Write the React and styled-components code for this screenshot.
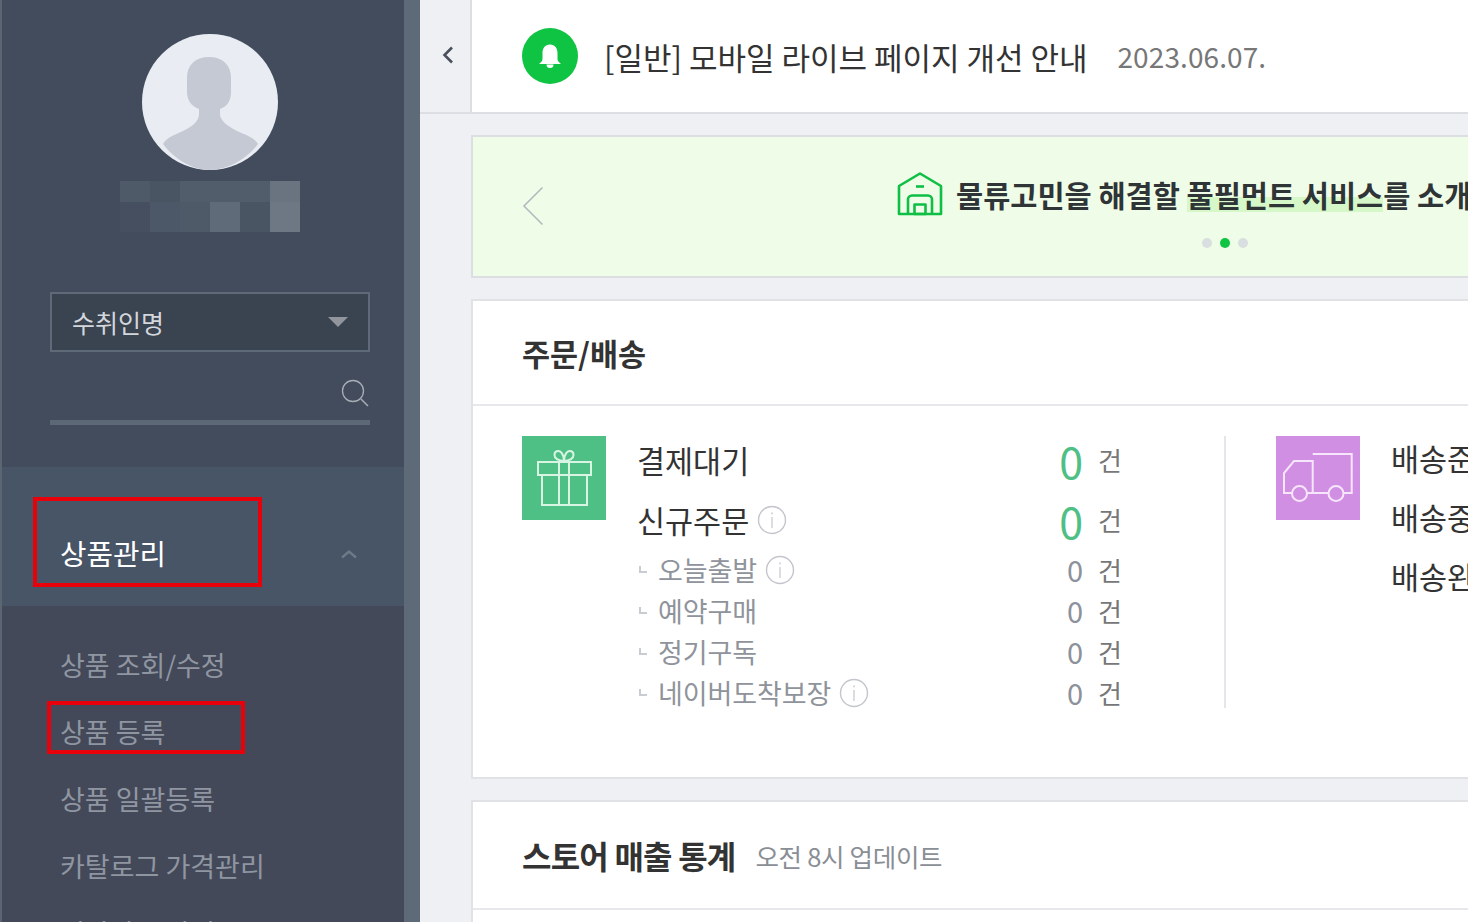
import React from "react";
import styled, { createGlobalStyle } from "styled-components";

const GlobalStyle = createGlobalStyle`
  html, body {
    margin: 0;
    padding: 0;
    height: 100%;
    overflow: hidden;
    background: #eef0f4;
    font-family: "Noto Sans CJK KR", "Noto Sans", sans-serif;
  }
  * { box-sizing: border-box; }
`;

const BLUR_CELLS = [
  "#4f5a69", "#4a5564", "#525d6c", "#525d6c", "#525d6c", "#6a7380",
  "#454f5f", "#4c5767", "#4f5a69", "#606b79", "#4a5564", "#6e7784",
];

const MENU = ["상품 조회/수정", "상품 등록", "상품 일괄등록", "카탈로그 가격관리", "연관상품 관리"];

const SUB_ROWS = [
  { label: "오늘출발", info: true },
  { label: "예약구매" },
  { label: "정기구독" },
  { label: "네이버도착보장", info: true },
];

function InfoIcon() {
  return (
    <InfoSvg viewBox="0 0 30 30">
      <circle cx="15" cy="15" r="13.5" fill="none" stroke="#c3c6cc" strokeWidth="1.4" />
      <path d="M15 12v11" stroke="#c3c6cc" strokeWidth="1.2" />
      <path d="M15 7.5v1.8" stroke="#c3c6cc" strokeWidth="1.4" />
    </InfoSvg>
  );
}

function Count({ big }) {
  return (
    <CountCell>
      <CountNum $big={big}>0</CountNum>
      <CountUnit>건</CountUnit>
    </CountCell>
  );
}

export default function App() {
  return (
    <Page>
      <GlobalStyle />
      <Sidebar>
        <Rail />
        <Profile>
          <Avatar>
            <svg width="136" height="136" viewBox="0 0 136 136">
              <path
                d="M67 23c-14 0-22 8-22 21v14c0 8 4 14 12 17v5c0 6-5 12-16 17-9 4-17 7-20 13 12 16 30 26 47 26s36-10 48-26c-3-6-12-9-21-13-10-5-17-11-17-17v-5c8-3 11-9 11-17V44c0-13-8-21-22-21z"
                fill="#c5c9d3"
              />
            </svg>
          </Avatar>
          <BlurName>
            {BLUR_CELLS.map((c, i) => (
              <BlurCell key={i} $color={c} />
            ))}
          </BlurName>
        </Profile>
        <Filter>
          <Select>
            수취인명
            <Caret />
          </Select>
          <SearchField>
            <svg width="30" height="30" viewBox="0 0 30 30">
              <circle cx="13" cy="13" r="10.5" fill="none" stroke="#a8adb6" strokeWidth="1.3" />
              <path d="M21 21l7 7" stroke="#a8adb6" strokeWidth="1.5" />
            </svg>
          </SearchField>
        </Filter>
        <MenuHead>
          상품관리
          <RedBox $left={33} $top={30} $width={229} $height={90} />
          <svg width="18" height="10" viewBox="0 0 18 10">
            <path d="M2 8.5l7-6 7 6" fill="none" stroke="#6f7a89" strokeWidth="2.4" />
          </svg>
        </MenuHead>
        <SubMenu>
          {MENU.map((m, i) => (
            <SubItem key={m}>
              {m}
              {i === 1 && <RedBox $left={47} $top={2} $width={198} $height={53} />}
            </SubItem>
          ))}
        </SubMenu>
      </Sidebar>

      <Main>
        <TopBar>
          <Collapse>
            <svg width="14" height="20" viewBox="0 0 14 20">
              <path d="M11 2.5L3.5 10l7.5 7.5" fill="none" stroke="#4a505b" strokeWidth="2.6" />
            </svg>
          </Collapse>
          <Notice>
            <BellBadge>
              <svg width="26" height="26" viewBox="0 0 26 26">
                <path
                  d="M13 1.5c-5 0-7.5 3.8-7.5 8.5v6c0 2-1.6 3.4-3.5 5h22c-1.900-1.600-3.500-3-3.500-5v-6c0-4.700-2.500-8.500-7.500-8.500z"
                  fill="#fff"
                />
                <path d="M9.500 21.500a3.500 3.500 0 0 0 7 0z" fill="#fff" />
              </svg>
            </BellBadge>
            <NoticeTitle>[일반] 모바일 라이브 페이지 개선 안내</NoticeTitle>
            <NoticeDate>2023.06.07.</NoticeDate>
          </Notice>
        </TopBar>

        <Content>
          <Banner>
            <svg width="22" height="40" viewBox="0 0 22 40">
              <path d="M20.500 1.500L2 20l18.500 18.500" fill="none" stroke="#b4b9c0" strokeWidth="1.6" />
            </svg>
            <BannerBody>
              <BannerLine>
                <svg width="46" height="44" viewBox="0 0 46 44">
                  <g fill="none" stroke="#0dbf45" strokeWidth="2.6" strokeLinejoin="round">
                    <path d="M2 14L23 1.500 44 14v28H2z" />
                    <path d="M11 42V27.500a4 4 0 0 1 4-4h16a4 4 0 0 1 4 4V42" />
                    <path d="M17.500 32.500h11V42h-11z" />
                    <path d="M19 14.500h8" />
                  </g>
                </svg>
                <BannerText>
                  물류고민을 해결할 <Highlight>풀필먼트 서비스</Highlight>를 소개합니다
                </BannerText>
              </BannerLine>
              <Dots>
                <Dot />
                <Dot $active />
                <Dot />
              </Dots>
            </BannerBody>
          </Banner>

          <Card>
            <CardHead>
              <CardTitle>주문/배송</CardTitle>
            </CardHead>
            <OrderBody>
              <OrderGroup>
                <Tile $color="#4fc085">
                  <svg width="84" height="84" viewBox="0 0 84 84">
                    <g fill="none" stroke="#d8f5e4" strokeWidth="2">
                      <path d="M16 26h53v13H16z" />
                      <path d="M20 39h45v30H20z" />
                      <path d="M37 26v43M47 26v43" />
                      <path d="M42 25c-6 0-9.500-3-9.500-6s2-4 4-4 5.500 3 5.500 10c0-7 3.500-10 5.500-10s4 1 4 4-3.500 6-9.500 6z" />
                    </g>
                  </svg>
                </Tile>
                <RowList>
                  <MainRow>
                    <MainLabel>결제대기</MainLabel>
                    <Count big />
                  </MainRow>
                  <MainRow>
                    <MainLabel>
                      신규주문 <InfoIcon />
                    </MainLabel>
                    <Count big />
                  </MainRow>
                  {SUB_ROWS.map((row) => (
                    <SubRow key={row.label}>
                      <SubLabel>
                        <Branch />
                        {row.label}
                        {row.info && <InfoIcon />}
                      </SubLabel>
                      <Count />
                    </SubRow>
                  ))}
                </RowList>
              </OrderGroup>
              <Divider />
              <OrderGroup>
                <Tile $color="#d08fe3">
                  <svg width="84" height="84" viewBox="0 0 84 84">
                    <g fill="none" stroke="#f7e6fb" strokeWidth="2">
                      <path d="M36.700 18h39v39H67.500M52.500 57H30.500M16 57H8V37l10-12h18.700v32" />
                      <circle cx="23.500" cy="57.500" r="7.500" />
                      <circle cx="60" cy="57.500" r="7.500" />
                    </g>
                  </svg>
                </Tile>
                <ShipList>
                  <MainLabel>배송준비</MainLabel>
                  <MainLabel>배송중</MainLabel>
                  <MainLabel>배송완료</MainLabel>
                </ShipList>
              </OrderGroup>
            </OrderBody>
          </Card>

          <Card>
            <StatsHead>
              <StatsTitle>스토어 매출 통계</StatsTitle>
              <StatsNote>오전 8시 업데이트</StatsNote>
            </StatsHead>
            <StatsBody />
          </Card>
        </Content>
      </Main>
    </Page>
  );
}

const Page = styled.div`
  display: flex;
  width: 1468px;
  height: 922px;
  overflow: hidden;
`;

const Sidebar = styled.aside`
  position: relative;
  flex: 0 0 420px;
  height: 922px;
  overflow: hidden;
  background: #424c5d;
  border-left: 2px solid #5c6673;
`;

const Rail = styled.div`
  position: absolute;
  z-index: 2;
  top: 0;
  right: 0;
  bottom: 0;
  width: 16px;
  background: #5f6a78;
`;

const Profile = styled.div`
  display: flex;
  flex-direction: column;
  align-items: center;
  padding-top: 34px;
  margin-left: -2px;
`;

const Avatar = styled.div`
  width: 136px;
  height: 136px;
  border-radius: 50%;
  overflow: hidden;
  background: #e9edf3;
  svg {
    display: block;
  }
`;

const BlurName = styled.div`
  display: grid;
  grid-template-columns: repeat(6, 30px);
  grid-template-rows: 21px 30px;
  margin-top: 11px;
`;

const BlurCell = styled.div`
  background: ${({ $color }) => $color};
`;

const Filter = styled.div`
  display: flex;
  flex-direction: column;
  margin: 60px 50px 0 48px;
  height: 175px;
`;

const Select = styled.div`
  display: flex;
  align-items: center;
  justify-content: space-between;
  height: 60px;
  padding: 0 20px;
  background: #3a4350;
  border: 2px solid #5f6a79;
  color: #d3d6db;
  font-size: 25px;
`;

const Caret = styled.span`
  width: 0;
  height: 0;
  border-left: 10px solid transparent;
  border-right: 10px solid transparent;
  border-top: 10px solid #92959c;
`;

const SearchField = styled.div`
  display: flex;
  justify-content: flex-end;
  align-items: flex-start;
  height: 73px;
  padding-top: 26px;
  border-bottom: 5px solid #5d6876;
  svg {
    display: block;
  }
`;

const MenuHead = styled.div`
  position: relative;
  display: flex;
  align-items: center;
  justify-content: space-between;
  height: 139px;
  padding: 32px 62px 0 58px;
  background: #485566;
  color: #fff;
  font-size: 28.8px;
  svg {
    display: block;
    margin-top: 2px;
  }
`;

const RedBox = styled.div`
  position: absolute;
  left: ${({ $left }) => $left - 2}px;
  top: ${({ $top }) => $top}px;
  width: ${({ $width }) => $width}px;
  height: ${({ $height }) => $height}px;
  border: 4px solid #e8000b;
  z-index: 1;
`;

const SubMenu = styled.div`
  padding-top: 26px;
  background: #434959;
  height: 400px;
`;

const SubItem = styled.div`
  position: relative;
  display: flex;
  align-items: center;
  height: 67px;
  padding: 0 0 3px 58px;
  color: #8f96a1;
  font-size: 27px;
`;

const Main = styled.main`
  flex: 1;
  min-width: 0;
  display: flex;
  flex-direction: column;
  background: #eef0f4;
`;

const TopBar = styled.header`
  flex: 0 0 114px;
  display: flex;
  border-bottom: 2px solid #dcdee3;
`;

const Collapse = styled.div`
  flex: 0 0 50px;
  display: flex;
  align-items: center;
  padding-left: 21px;
  padding-bottom: 3px;
  svg {
    display: block;
  }
`;

const Notice = styled.div`
  flex: 1;
  display: flex;
  align-items: center;
  padding-left: 50px;
  background: #fff;
  border-left: 2px solid #dcdee3;
  white-space: nowrap;
`;

const BellBadge = styled.div`
  display: flex;
  align-items: center;
  justify-content: center;
  width: 56px;
  height: 56px;
  border-radius: 50%;
  background: #0fc443;
`;

const NoticeTitle = styled.span`
  margin-left: 26px;
  color: #333;
  font-size: 31px;
`;

const NoticeDate = styled.span`
  margin-left: 30px;
  color: #777;
  font-size: 28px;
  letter-spacing: 0.1px;
`;

const Content = styled.div`
  flex: 1;
  min-height: 0;
  display: flex;
  flex-direction: column;
  gap: 21px;
  padding: 21px 0 0 51px;
  overflow: hidden;
`;

const Banner = styled.section`
  flex: none;
  display: flex;
  align-items: center;
  height: 143px;
  padding-left: 49px;
  padding-bottom: 2px;
  background: #effde8;
  border: 2px solid #dcdee3;
  border-right: 0;
  white-space: nowrap;
  overflow: hidden;
  svg {
    display: block;
    flex: none;
  }
`;

const BannerBody = styled.div`
  display: flex;
  flex-direction: column;
  margin-left: 353px;
  margin-top: 8px;
`;

const BannerLine = styled.div`
  display: flex;
  align-items: center;
  gap: 13px;
`;

const BannerText = styled.div`
  color: #2f3437;
  font-size: 29.5px;
  font-weight: 700;
`;

const Highlight = styled.span`
  background: linear-gradient(transparent 58%, #d6f8c8 58%, #d6f8c8 92%, transparent 92%);
`;

const Dots = styled.div`
  display: flex;
  gap: 8px;
  margin: 22px 0 0 305px;
`;

const Dot = styled.span`
  width: 10px;
  height: 10px;
  border-radius: 50%;
  background: ${({ $active }) => ($active ? "#0fc443" : "#d9dee0")};
`;

const Card = styled.section`
  flex: none;
  background: #fff;
  border: 2px solid #e0e2e6;
  border-right: 0;
`;

const CardHead = styled.div`
  display: flex;
  align-items: center;
  height: 105px;
  padding-left: 49px;
  border-bottom: 2px solid #e6e8eb;
`;

const CardTitle = styled.h2`
  margin: 0;
  color: #333;
  font-size: 30.5px;
  font-weight: 700;
`;

const OrderBody = styled.div`
  display: flex;
  align-items: flex-start;
  height: 371px;
  padding: 30px 0 0 49px;
  white-space: nowrap;
`;

const OrderGroup = styled.div`
  display: flex;
  gap: 31px;
`;

const Tile = styled.div`
  flex: 0 0 84px;
  width: 84px;
  height: 84px;
  background: ${({ $color }) => $color};
  svg {
    display: block;
  }
`;

const RowList = styled.div`
  display: flex;
  flex-direction: column;
  width: 485px;
`;

const MainRow = styled.div`
  display: flex;
  align-items: center;
  justify-content: space-between;
  height: 60px;
  margin-top: -6px;
  margin-bottom: 6px;
`;

const MainLabel = styled.div`
  display: flex;
  align-items: center;
  gap: 8px;
  color: #333;
  font-size: 30.5px;
`;

const SubRow = styled.div`
  display: flex;
  align-items: center;
  justify-content: space-between;
  height: 41px;
  &:nth-child(3) {
    margin-top: -7px;
  }
`;

const SubLabel = styled.div`
  display: flex;
  align-items: center;
  color: #8f939b;
  font-size: 27px;
  letter-spacing: -0.1px;
  svg {
    margin-left: 8px;
  }
`;

const Branch = styled.span`
  width: 8px;
  height: 7px;
  margin: 0 11px 0 2px;
  border-left: 2px solid #c9ccd1;
  border-bottom: 2px solid #c9ccd1;
`;

const InfoSvg = styled.svg`
  display: block;
  width: 30px;
  height: 30px;
`;

const CountCell = styled.div`
  display: flex;
  align-items: center;
  justify-content: flex-end;
  gap: 15px;
`;

const CountNum = styled.span`
  color: ${({ $big }) => ($big ? "#4fc085" : "#8d919b")};
  font-size: ${({ $big }) => ($big ? "43px" : "29px")};
  line-height: 1;
`;

const CountUnit = styled.span`
  color: #777;
  font-size: 26px;
  line-height: 1;
`;

const Divider = styled.div`
  flex: none;
  width: 2px;
  height: 272px;
  margin: 0 50px 0 102px;
  background: #e5e6e9;
`;

const ShipList = styled.div`
  display: flex;
  flex-direction: column;
  gap: 15px;
  margin-top: 0;
`;

const StatsHead = styled(CardHead)`
  height: 108px;
  gap: 20px;
`;

const StatsTitle = styled(CardTitle)`
  font-size: 32px;
  letter-spacing: -0.8px;
`;

const StatsNote = styled.span`
  color: #8a8e95;
  font-size: 25.5px;
  letter-spacing: -0.3px;
`;

const StatsBody = styled.div`
  height: 60px;
`;
